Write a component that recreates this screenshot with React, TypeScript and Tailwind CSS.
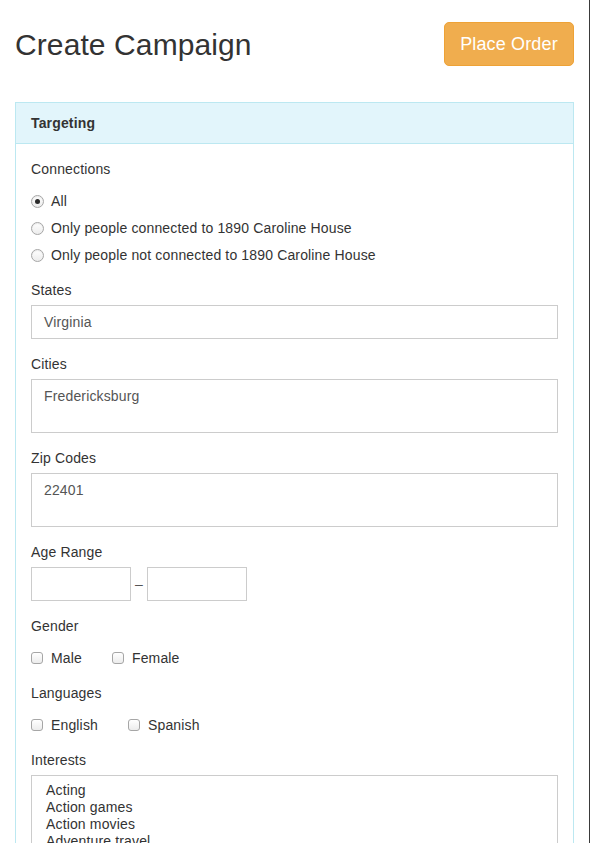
const interests = ['Acting', 'Action games', 'Action movies', 'Adventure travel', 'Aerobics', 'Air travel']

function Radio({ checked, label }: { checked?: boolean; label: string }) {
  return (
    <div className="flex h-5 items-center">
      <span className="flex size-[13px] items-center justify-center rounded-full border border-[#a6a6a6] bg-gradient-to-b from-white to-[#ececec] shadow-[inset_0_1px_1px_rgba(0,0,0,0.08)]">
        {checked && <span className="size-[5px] rounded-full bg-[#2b2b2b]" />}
      </span>
      <span className="ml-[7px]">{label}</span>
    </div>
  )
}

function Checkbox({ label }: { label: string }) {
  return (
    <div className="flex h-5 items-center">
      <span className="size-[12px] rounded-[3px] border border-[#a6a6a6] bg-gradient-to-b from-white to-[#ececec]" />
      <span className="ml-[8px]">{label}</span>
    </div>
  )
}

function Label({ children }: { children: React.ReactNode }) {
  return <div className="h-5 leading-5">{children}</div>
}

export default function App() {
  return (
    <div
      className="h-[843px] w-[590px] overflow-hidden border-r border-[#3a3a3a] bg-white text-[14px] leading-5 tracking-[0.15px] text-[#333]"
      style={{ fontFamily: '"Liberation Sans", Arial, sans-serif' }}
    >
      <div className="flex items-start justify-between px-[15px] pt-[22px]">
        <h1 className="mt-[6px] text-[30px] leading-[33px] font-normal tracking-[0.1px] text-[#333]">Create Campaign</h1>
        <button className="h-[44px] w-[130px] rounded-[5px] border border-[#eea236] bg-[#f0ad4e] text-[18px] text-white">
          Place Order
        </button>
      </div>

      <div className="ml-[15px] mt-[36px] w-[559px] border border-[#bce8f1]">
        <div className="flex h-[41px] items-center border-b border-[#bce8f1] bg-[#e2f5fb] px-[15px] font-bold text-[#333]">
          Targeting
        </div>

        <div className="px-[15px] pt-[15px]">
          <Label>Connections</Label>
          <div className="mt-[12px] flex flex-col gap-[7px]">
            <Radio checked label="All" />
            <Radio label="Only people connected to 1890 Caroline House" />
            <Radio label="Only people not connected to 1890 Caroline House" />
          </div>

          <div className="mt-[15px]">
            <Label>States</Label>
            <div className="mt-[5px] flex h-[34px] items-center border border-[#ccc] px-[12px] text-[#555]">Virginia</div>
          </div>

          <div className="mt-[15px]">
            <Label>Cities</Label>
            <div className="mt-[5px] h-[54px] border border-[#ccc] px-[12px] pt-[6px] text-[#555]">Fredericksburg</div>
          </div>

          <div className="mt-[15px]">
            <Label>Zip Codes</Label>
            <div className="mt-[5px] h-[54px] border border-[#ccc] px-[12px] pt-[6px] text-[#555]">22401</div>
          </div>

          <div className="mt-[15px]">
            <Label>Age Range</Label>
            <div className="mt-[5px] flex items-center">
              <div className="h-[34px] w-[100px] border border-[#ccc]" />
              <span className="w-[16px] text-center text-[#555]">–</span>
              <div className="h-[34px] w-[100px] border border-[#ccc]" />
            </div>
          </div>

          <div className="mt-[15px]">
            <Label>Gender</Label>
            <div className="mt-[12px] flex gap-[30px]">
              <Checkbox label="Male" />
              <Checkbox label="Female" />
            </div>
          </div>

          <div className="mt-[15px]">
            <Label>Languages</Label>
            <div className="mt-[12px] flex gap-[30px]">
              <Checkbox label="English" />
              <Checkbox label="Spanish" />
            </div>
          </div>

          <div className="mt-[15px]">
            <Label>Interests</Label>
            <div className="mt-[5px] h-[120px] overflow-hidden border border-[#ccc] px-[14px] pt-[6px] leading-[17px] text-[#333]">
              {interests.map((item) => (
                <div key={item}>{item}</div>
              ))}
            </div>
          </div>
        </div>
      </div>
    </div>
  )
}
